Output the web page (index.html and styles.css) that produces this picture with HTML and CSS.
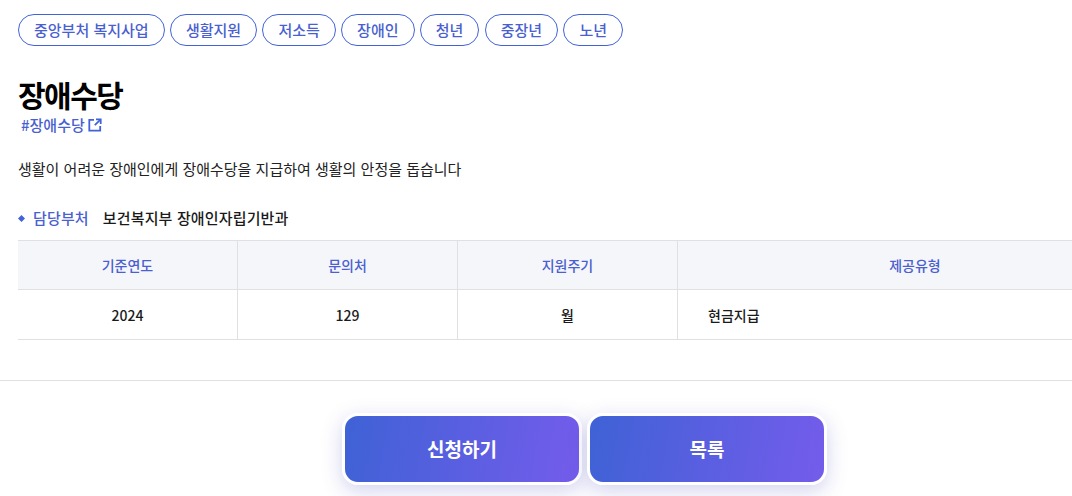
FILE: index.html
```html
<!DOCTYPE html>
<html lang="ko">
<head>
    <meta charset="UTF-8">
    <meta name="viewport" content="width=device-width, initial-scale=1.0">
    <title>장애수당</title>
    <link rel="stylesheet" href="styles.css">
</head>
<body>
    <div class="content">
        <ul class="tags">
            <li>중앙부처 복지사업</li>
            <li>생활지원</li>
            <li>저소득</li>
            <li>장애인</li>
            <li>청년</li>
            <li>중장년</li>
            <li>노년</li>
        </ul>
        <h1 class="title">장애수당</h1>
        <a class="hash-link" href="#">#장애수당
            <svg class="link-icon" width="14" height="14" viewBox="0 0 14 14" fill="none" stroke="#4263d8" stroke-width="1.8">
                <path d="M6 1.8H1.3V12.7H12.2V8"/>
                <path d="M8 1.3H12.7V6"/>
                <path d="M12.4 1.6L6.8 7.2"/>
            </svg>
        </a>
        <p class="summary">생활이 어려운 장애인에게 장애수당을 지급하여 생활의 안정을 돕습니다</p>
        <div class="dept">
            <span class="dept-label">담당부처</span>
            <span class="dept-name">보건복지부 장애인자립기반과</span>
        </div>
        <table class="info-table">
            <thead>
                <tr>
                    <th class="col-year">기준연도</th>
                    <th class="col-tel">문의처</th>
                    <th class="col-cycle">지원주기</th>
                    <th class="col-type">제공유형</th>
                </tr>
            </thead>
            <tbody>
                <tr>
                    <td>2024</td>
                    <td>129</td>
                    <td>월</td>
                    <td class="left">현금지급</td>
                </tr>
            </tbody>
        </table>
    </div>
    <div class="actions">
        <a class="btn" href="#">신청하기</a>
        <a class="btn" href="#">목록</a>
    </div>
</body>
</html>
```

FILE: styles.css
```css
* {
    box-sizing: border-box;
}

html, body {
    height: 496px;
    overflow: hidden;
}

body {
    margin: 0;
    background-color: #fff;
    color: #1a1a1a;
    font-family: "Noto Sans CJK KR", "Noto Sans", sans-serif;
}

.content {
    height: 381px;
    padding: 14px 0 40px 18px;
    border-bottom: 1px solid #dfe0e4;
}

.tags {
    display: flex;
    gap: 5.3px;
    margin: 0;
    padding: 0;
    list-style: none;
}

.tags li {
    height: 32px;
    padding: 0 15px;
    border: 1px solid #4263d8;
    border-radius: 16px;
    color: #4a5fd0;
    font-size: 15px;
    font-weight: 500;
    line-height: 30px;
}

.title {
    margin: 28px 0 0;
    color: #000;
    font-size: 30px;
    font-weight: 700;
    line-height: 40px;
    letter-spacing: -1.5px;
}

.hash-link {
    display: flex;
    align-items: center;
    gap: 3px;
    margin-left: 3px;
    color: #4a5fd0;
    font-size: 15px;
    font-weight: 500;
    line-height: 22px;
    text-decoration: none;
}

.summary {
    margin: 22px 0 0;
    color: #222;
    font-size: 15px;
    line-height: 22px;
}

.dept {
    display: flex;
    align-items: center;
    height: 22px;
    margin-top: 26px;
    font-size: 15px;
    font-weight: 500;
    letter-spacing: 0.15px;
}

.dept-label {
    position: relative;
    margin-right: 14px;
    padding-left: 15px;
    color: #4a5fd0;
}

.dept-label::before {
    content: "";
    position: absolute;
    left: 1px;
    top: 9px;
    width: 5px;
    height: 5px;
    background-color: #4263d8;
    transform: rotate(45deg);
}

.info-table {
    width: 100%;
    margin-top: 12px;
    border-collapse: collapse;
    border-top: 1px solid #dfe0e4;
    font-size: 14px;
    table-layout: fixed;
}

.col-tel,
.col-cycle {
    width: 220px;
}

.col-year {
    width: 219.5px;
}

.info-table th,
.info-table td {
    border-bottom: 1px solid #dfe0e4;
    border-left: 1px solid #dfe0e4;
    text-align: center;
}

.info-table th:first-child,
.info-table td:first-child {
    border-left: none;
}

.info-table th {
    height: 49px;
    background-color: #f5f6fa;
    color: #4a5fd0;
    font-weight: 500;
}

.info-table th.col-type {
    padding-left: 81px;
}

.info-table td {
    height: 50px;
    font-weight: 500;
}

.info-table td.left {
    padding-left: 30px;
    text-align: left;
}

.actions {
    display: flex;
    justify-content: center;
    gap: 5px;
    margin-top: 32px;
    padding-left: 97px;
}

.btn {
    display: block;
    width: 240px;
    height: 72px;
    border: 3px solid #fff;
    border-radius: 16px;
    background: linear-gradient(100deg, #3f62d6, #745ceb);
    box-shadow: 0 6px 20px rgba(80, 80, 190, 0.25);
    color: #fff;
    font-size: 19px;
    font-weight: 700;
    line-height: 66px;
    text-align: center;
    text-decoration: none;
}
```
